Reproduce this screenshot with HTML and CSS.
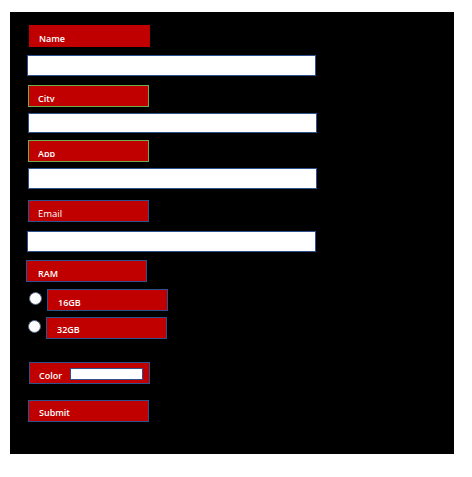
FILE: index.html
```html
<!DOCTYPE html>
<html>
<head>
<meta charset="utf-8">
<link rel="stylesheet" href="styles.css">
</head>
<body>
<form class="panel">
  <div class="tag plain n-name"><span class="txt">Name</span></div>
  <input class="field f-name" type="text">
  <div class="tag green n-city"><span class="txt">City</span></div>
  <input class="field f-city" type="text">
  <div class="tag green n-app"><span class="txt">App</span></div>
  <input class="field f-app" type="text">
  <div class="tag n-email"><span class="txt full">Email</span></div>
  <input class="field f-email" type="text">
  <div class="tag n-ram"><span class="txt">RAM</span></div>
  <div class="opt o1">
    <input class="radio" type="radio" name="ram">
    <div class="tag"><span class="txt">16GB</span></div>
  </div>
  <div class="opt o2">
    <input class="radio" type="radio" name="ram">
    <div class="tag"><span class="txt">32GB</span></div>
  </div>
  <div class="tag colorbox">
    <span class="txt">Color</span>
    <input class="swatch" type="color" value="#ffffff">
  </div>
  <div class="tag submit"><span class="txt">Submit</span></div>
</form>
</body>
</html>
```

FILE: styles.css
```css
html, body {
  margin: 0;
  padding: 0;
  background: #ffffff;
}

.panel {
  box-sizing: border-box;
  margin: 12px 0 0 10px;
  width: 444px;
  height: 442px;
  background: #000000;
  padding-top: 13px;
  display: flex;
  flex-direction: column;
  align-items: flex-start;
}

.tag {
  box-sizing: border-box;
  width: 121px;
  height: 22px;
  background: #c00000;
  border: 1px solid #2f528f;
  padding-left: 9px;
  color: #ffffff;
  font-family: "Open Sans", "DejaVu Sans", sans-serif;
  font-size: 9px;
  font-weight: 600;
}

.tag.plain { border-color: #c00000; }
.tag.green { border-color: #70ad47; }

.txt {
  display: block;
  padding-top: 7px;
  height: 9px;
  line-height: 12px;
  overflow: hidden;
  white-space: nowrap;
}

.txt.full {
  height: 12px;
  font-size: 9.5px;
  font-weight: 400;
}

.field {
  box-sizing: border-box;
  display: block;
  width: 289px;
  height: 21px;
  margin: 0;
  padding: 0;
  border: 1px solid #2f528f;
  background: #ffffff;
}

.n-name { margin-left: 19px; }
.f-name { margin: 8px 0 0 17px; }
.n-city { margin: 9px 0 0 18px; }
.f-city { margin: 6px 0 0 18px; height: 20px; }
.n-app { margin: 7px 0 0 18px; }
.f-app { margin: 6px 0 0 18px; }
.n-email { margin: 11px 0 0 18px; }
.f-email { margin: 9px 0 0 17px; }
.n-ram { margin: 8px 0 0 16px; padding-left: 11px; }

.opt {
  display: flex;
  align-items: flex-start;
}
.o1 { margin: 7px 0 0 18px; }
.o2 { margin: 6px 0 0 17px; }
.o1 .tag, .o2 .tag { padding-left: 10px; }
.o2 .txt { padding-top: 6px; height: 10px; }

.radio {
  appearance: none;
  -webkit-appearance: none;
  box-sizing: border-box;
  width: 13px;
  height: 13px;
  margin: 3px 5px 0 1px;
  border: 1px solid #51617c;
  border-radius: 50%;
  background: #ffffff;
}

.colorbox {
  margin: 23px 0 0 19px;
  display: flex;
  align-items: flex-start;
}
.colorbox .txt { width: 31px; }

.swatch {
  appearance: none;
  -webkit-appearance: none;
  box-sizing: border-box;
  width: 73px;
  height: 12px;
  margin: 5px 0 0 0;
  padding: 0;
  border: 1px solid #2f528f;
  background: #ffffff;
}
.swatch::-webkit-color-swatch-wrapper { padding: 0; }
.swatch::-webkit-color-swatch { border: none; }

.submit { margin: 16px 0 0 18px; padding-left: 10px; }
.submit .txt { padding-top: 6px; height: 10px; }
```
